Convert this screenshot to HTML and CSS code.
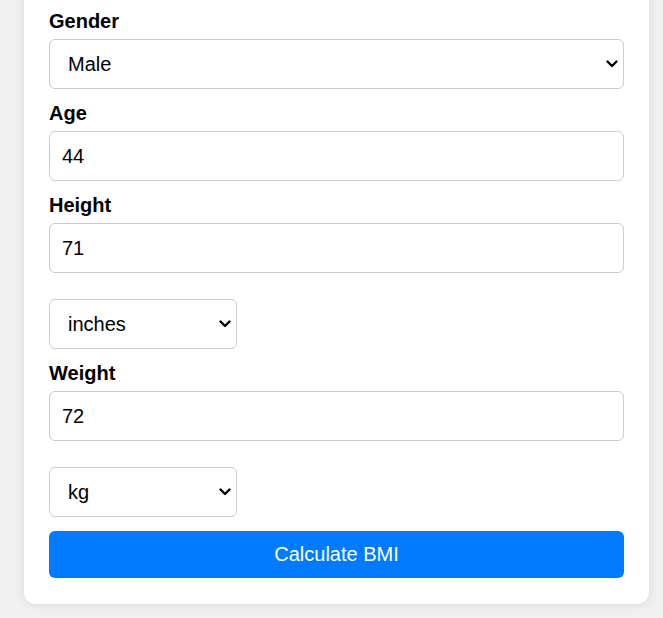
FILE: index.html
```html
<!DOCTYPE html>
<html lang="en">
<head>
<meta charset="utf-8">
<title>BMI Calculator</title>
<link rel="stylesheet" href="styles.css">
</head>
<body>
  <div class="card">
    <form class="form">
      <label class="label" for="gender">Gender</label>
      <select class="field select" id="gender">
        <option>Male</option>
        <option>Female</option>
      </select>

      <label class="label" for="age">Age</label>
      <input class="field" id="age" type="number" value="44">

      <label class="label" for="height">Height</label>
      <input class="field" id="height" type="number" value="71">
      <select class="field select unit">
        <option>inches</option>
        <option>cm</option>
      </select>

      <label class="label" for="weight">Weight</label>
      <input class="field" id="weight" type="number" value="72">
      <select class="field select unit">
        <option>kg</option>
        <option>lbs</option>
      </select>

      <button class="btn" type="button">Calculate BMI</button>
    </form>
  </div>
</body>
</html>
```
FILE: styles.css
```css
* { box-sizing: border-box; }

html, body {
  margin: 0;
  padding: 0;
}

body {
  background: #f0f0f0;
  font-family: "Liberation Sans", Arial, sans-serif;
  color: #000;
  padding-left: 24px;
  height: 618px;
  overflow: hidden;
}

.card {
  width: 625px;
  margin-top: -15px;
  background: #fff;
  border-radius: 12px;
  box-shadow: 0 0 10px rgba(0, 0, 0, 0.1);
  padding: 25px 25px 26px;
}

.form {
  display: flex;
  flex-direction: column;
  align-items: stretch;
}

.label {
  display: block;
  font-size: 20px;
  font-weight: bold;
  line-height: 23px;
  margin-bottom: 6px;
}

.field {
  display: block;
  width: 100%;
  height: 50px;
  padding: 0 12px;
  font-family: "Liberation Sans", Arial, sans-serif;
  font-size: 20px;
  color: #000;
  background: #fff;
  border: 1px solid #ccc;
  border-radius: 6px;
  margin: 0 0 13px 0;
}

.field.select {
  -webkit-appearance: none;
  appearance: none;
  padding: 0 30px 0 18px;
  background-image: url("data:image/svg+xml,%3Csvg xmlns='http://www.w3.org/2000/svg' width='12' height='8' viewBox='0 0 12 8'%3E%3Cpath d='M1.5 1.5 L6 6 L10.5 1.5' fill='none' stroke='%23000' stroke-width='2.4' stroke-linecap='round' stroke-linejoin='round'/%3E%3C/svg%3E");
  background-repeat: no-repeat;
  background-position: right 5px center;
  background-size: 12px 8px;
}

.field.unit {
  width: 188px;
  margin-top: 13px;
}

.btn {
  display: block;
  width: 100%;
  height: 47px;
  margin-top: 1px;
  background: #007bff;
  color: #fff;
  border: none;
  border-radius: 6px;
  font-family: "Liberation Sans", Arial, sans-serif;
  font-size: 20px;
}
```
